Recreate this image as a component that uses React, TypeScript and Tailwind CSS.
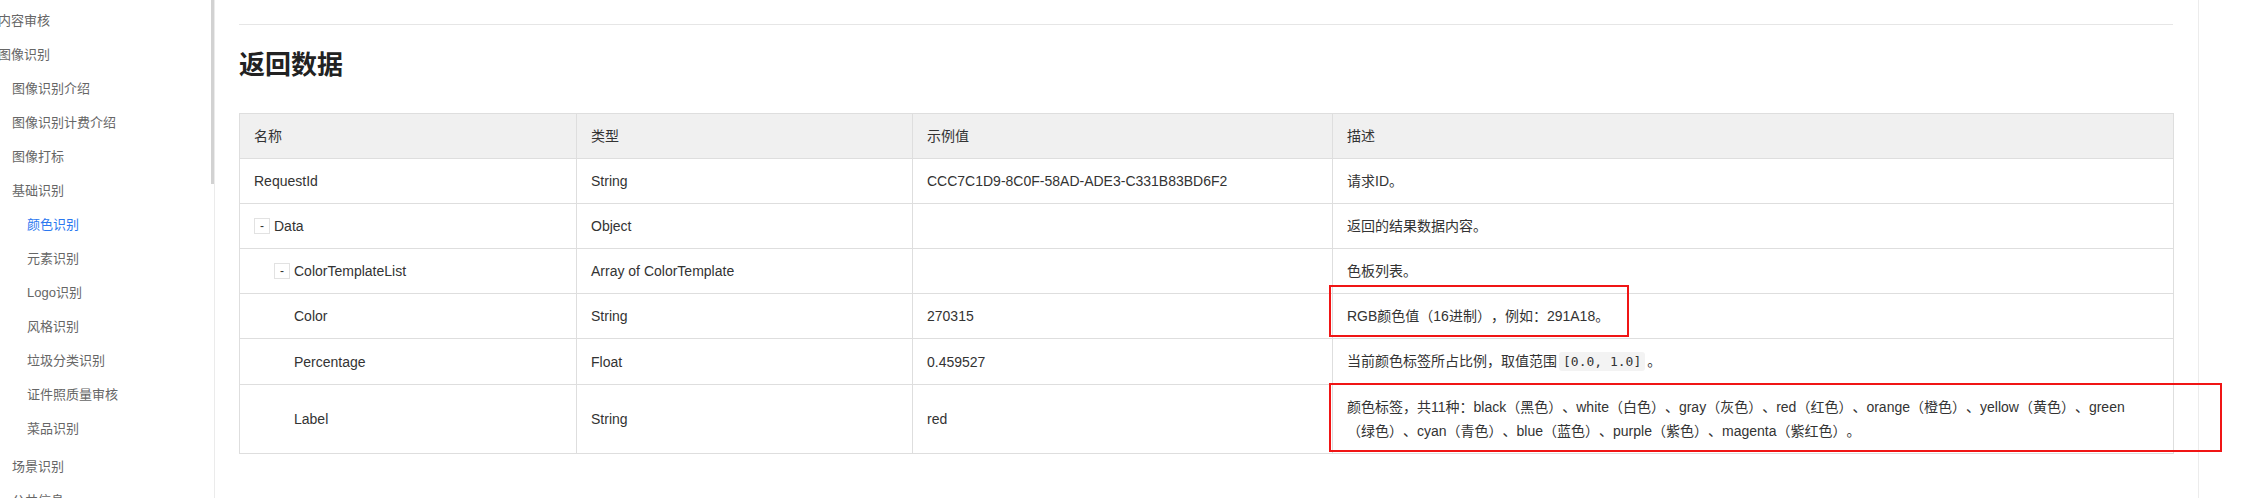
import { Fragment } from "react";
import type { ReactNode } from "react";

type Row = {
    name: string
    level: number
    toggle?: boolean
    type: string
    example: string
    desc: ReactNode
}

const indent = ["pl-0", "pl-[20px]", "pl-[40px]"]

const navItems = [
    { label: "内容审核", level: 0 },
    { label: "图像识别", level: 0 },
    { label: "图像识别介绍", level: 1 },
    { label: "图像识别计费介绍", level: 1 },
    { label: "图像打标", level: 1 },
    { label: "基础识别", level: 1 },
    { label: "颜色识别", level: 2, active: true },
    { label: "元素识别", level: 2 },
    { label: "Logo识别", level: 2 },
    { label: "风格识别", level: 2 },
    { label: "垃圾分类识别", level: 2 },
    { label: "证件照质量审核", level: 2 },
    { label: "菜品识别", level: 2 },
    { label: "场景识别", level: 1, gap: true },
    { label: "公共信息", level: 1 },
]

const navIndent = ["pl-0", "pl-[14px]", "pl-[29px]"]

const colorLabels = [
    ["black", "黑色"],
    ["white", "白色"],
    ["gray", "灰色"],
    ["red", "红色"],
    ["orange", "橙色"],
    ["yellow", "黄色"],
    ["green", "绿色"],
    ["cyan", "青色"],
    ["blue", "蓝色"],
    ["purple", "紫色"],
    ["magenta", "紫红色"],
]

const rows: Row[] = [
    { name: "RequestId", level: 0, type: "String", example: "CCC7C1D9-8C0F-58AD-ADE3-C331B83BD6F2", desc: "请求ID。" },
    { name: "Data", level: 0, toggle: true, type: "Object", example: "", desc: "返回的结果数据内容。" },
    { name: "ColorTemplateList", level: 1, toggle: true, type: "Array of ColorTemplate", example: "", desc: "色板列表。" },
    { name: "Color", level: 2, type: "String", example: "270315", desc: "RGB颜色值（16进制），例如：291A18。" },
    {
        name: "Percentage", level: 2, type: "Float", example: "0.459527",
        desc: (
            <>
                当前颜色标签所占比例，取值范围
                <code className="mx-[2px] rounded-[3px] bg-[#f3f3f3] px-[4px] py-[2px] font-['DejaVu_Sans_Mono',monospace] text-[13px]">[0.0, 1.0]</code>
                。
            </>
        ),
    },
    {
        name: "Label", level: 2, type: "String", example: "red",
        desc: (
            <>
                颜色标签，共11种：
                {colorLabels.map(([en, zh], i) => (
                    <Fragment key={en}>
                        {en}
                        <span className="whitespace-nowrap">（{zh}）</span>
                        {i < colorLabels.length - 1 ? "、" : "。"}
                    </Fragment>
                ))}
            </>
        ),
    },
]

function Toggle() {
    return (
        <span className="mr-[4px] inline-flex h-[16px] w-[16px] items-center justify-center border border-[#e2e2e2] bg-white text-[12px] leading-none">
            -
        </span>
    )
}

export default function App() {
    return (
        <div className="relative flex h-[498px] w-[2266px] overflow-hidden bg-white font-['Liberation_Sans','Noto_Sans_CJK_SC',sans-serif] text-[#333] [text-spacing-trim:space-all]">
            {/* Sidebar nav, scrolled part way down */}
            <aside className="relative w-[215px] shrink-0 border-r border-[#ebebeb]">
                <nav className="-ml-[2px] pt-[4px] text-[13px] text-[#666]">
                    {navItems.map((item) => (
                        <div
                            key={item.label}
                            className={`flex h-[34px] items-center whitespace-nowrap ${navIndent[item.level]} ${item.gap ? "mt-[4px]" : ""} ${item.active ? "text-[#2b78f0]" : ""}`}
                        >
                            {item.label}
                        </div>
                    ))}
                </nav>
                <div className="absolute right-0 top-0 h-[184px] w-[3px] bg-[#d2d2d2]" />
            </aside>

            {/* Main content */}
            <main className="w-[1984px] shrink-0 border-r border-[#ececec] pl-[24px] pr-[25px] pt-[24px]">
                <div className="border-t border-[#e6e6e6]" />
                <h2 className="mt-[21px] mb-[29px] text-[26px] font-bold leading-[38px] text-[#222]">返回数据</h2>
                <table className="w-[1934px] table-fixed border-collapse text-[14px] leading-[24px]">
                    <colgroup>
                        <col className="w-[337px]" />
                        <col className="w-[336px]" />
                        <col className="w-[420px]" />
                        <col className="w-[841px]" />
                    </colgroup>
                    <thead>
                        <tr className="bg-[#f0f0f0]">
                            {["名称", "类型", "示例值", "描述"].map((h) => (
                                <th key={h} className="border border-[#dedede] px-[14px] py-[10px] text-left font-normal">{h}</th>
                            ))}
                        </tr>
                    </thead>
                    <tbody>
                        {rows.map((r) => (
                            <tr key={r.name}>
                                <td className="border border-[#dedede] px-[14px] py-[10px]">
                                    <div className={`flex items-center ${indent[r.level]}`}>
                                        {r.toggle && <Toggle />}
                                        <span>{r.name}</span>
                                    </div>
                                </td>
                                <td className="border border-[#dedede] px-[14px] py-[10px]">{r.type}</td>
                                <td className="border border-[#dedede] px-[14px] py-[10px]">{r.example}</td>
                                <td className="border border-[#dedede] px-[14px] py-[10px]">{r.desc}</td>
                            </tr>
                        ))}
                    </tbody>
                </table>
            </main>

            <div className="flex-1" />

            {/* Red annotation boxes drawn over the table */}
            <div className="pointer-events-none absolute left-[1329px] top-[285px] h-[52px] w-[300px] border-2 border-[#f01515]" />
            <div className="pointer-events-none absolute left-[1329px] top-[383px] h-[69px] w-[893px] border-2 border-[#f01515]" />
        </div>
    )
}
